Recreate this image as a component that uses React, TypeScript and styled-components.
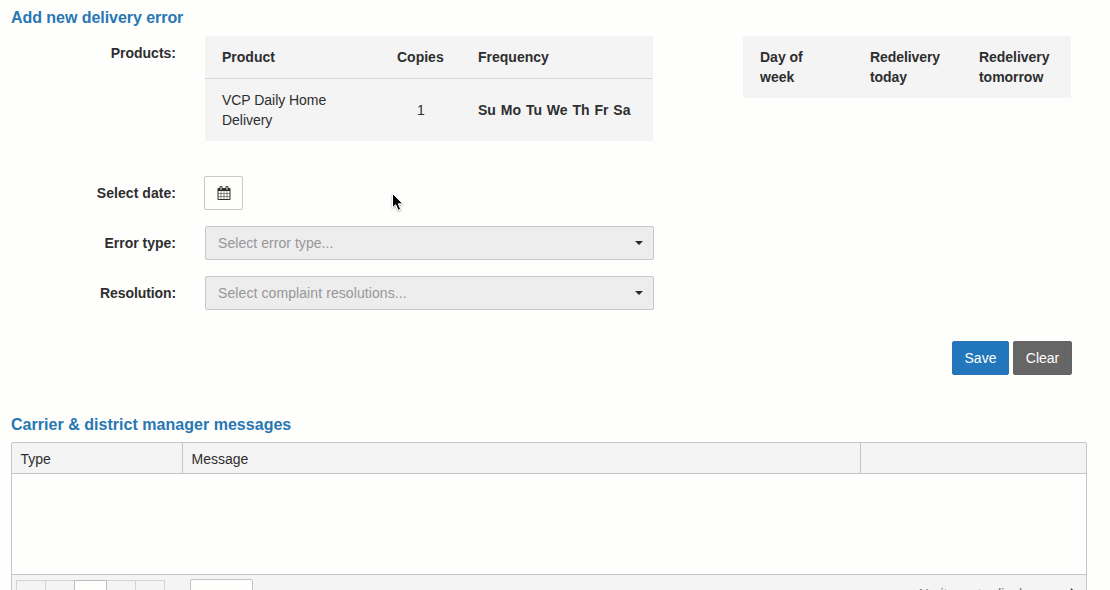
import React from "react";
import styled, { createGlobalStyle } from "styled-components";

const GlobalStyle = createGlobalStyle`
  *, *::before, *::after { box-sizing: border-box; }
  html, body { margin: 0; height: 100%; overflow: hidden; }
  body {
    background: #fefefd;
    color: #2e2e2e;
    font: 14px/20px "Liberation Sans", Arial, sans-serif;
  }
`;

const Page = styled.main`
  position: relative;
  width: 1110px;
  height: 590px;
  padding: 8px 23px 0 11px;
  overflow: hidden;
`;

const SectionTitle = styled.h2<{ $tracking?: string }>`
  margin: 0;
  font-size: 16px;
  line-height: 20px;
  font-weight: bold;
  color: #2877b3;
  letter-spacing: ${(p) => p.$tracking ?? "normal"};
`;

const ProductsRow = styled.div`
  display: flex;
  align-items: flex-start;
  margin-top: 8px;
  height: 105px;
`;

const Label = styled.label<{ $tracking?: string }>`
  flex: none;
  width: 165px;
  text-align: right;
  font-weight: bold;
  letter-spacing: ${(p) => p.$tracking ?? "normal"};
`;

const ProductsLabel = styled(Label)`
  padding-top: 7px;
`;

const Panel = styled.div<{ $left: number; $width: number }>`
  flex: none;
  width: ${(p) => p.$width}px;
  margin-left: ${(p) => p.$left}px;
  background: #f4f4f5;
`;

const PanelRow = styled.div<{ $columns: string; $divided?: boolean }>`
  display: grid;
  grid-template-columns: ${(p) => p.$columns};
  align-items: center;
  padding: 11px 0 11px 17px;
  border-bottom: ${(p) => (p.$divided ? "1px solid #d5d9de" : "0")};
`;

const Cell = styled.div<{ $bold?: boolean; $indent?: number; $max?: number; $tracking?: string }>`
  padding-left: ${(p) => p.$indent ?? 0}px;
  max-width: ${(p) => (p.$max ? `${p.$max}px` : "none")};
  font-weight: ${(p) => (p.$bold ? "bold" : "normal")};
  letter-spacing: ${(p) => p.$tracking ?? "normal"};
`;

const Weekdays = styled(Cell)`
  word-spacing: 1px;
`;

const FieldRow = styled.div<{ $gap: number }>`
  display: flex;
  align-items: center;
  height: 34px;
  margin-top: ${(p) => p.$gap}px;
`;

const DateButton = styled.button`
  display: flex;
  align-items: center;
  justify-content: center;
  width: 39px;
  height: 34px;
  margin-left: 28px;
  padding: 0;
  border: 1px solid #c9c9c9;
  border-radius: 2px;
  background: #fefefd;
  color: #2e2e2e;
`;

const Select = styled.div<{ $tracking?: string }>`
  display: flex;
  align-items: center;
  justify-content: space-between;
  width: 449px;
  height: 34px;
  margin-left: 29px;
  padding: 0 10px 0 12px;
  border: 1px solid #c8c8ca;
  border-radius: 2px;
  background: #ededee;
  color: #979797;
  letter-spacing: ${(p) => p.$tracking ?? "normal"};
`;

const Caret = styled.span`
  border: 4px solid transparent;
  border-top-color: #2b2b2b;
  border-bottom: 0;
`;

const Actions = styled.div`
  display: flex;
  justify-content: flex-end;
  gap: 4px;
  margin-top: 31px;
  padding-right: 15px;
`;

const ActionButton = styled.button<{ $color: string; $edge: string; $width: number }>`
  width: ${(p) => p.$width}px;
  height: 34px;
  padding: 0;
  border: 1px solid ${(p) => p.$edge};
  border-radius: 2px;
  background: ${(p) => p.$color};
  color: #fff;
  font: inherit;
`;

const MessagesSection = styled.section`
  margin-top: 40px;
`;

const Grid = styled.div`
  width: 1076px;
  margin-top: 7px;
  border: 1px solid #c6c6ca;
  border-radius: 2px 2px 0 0;
`;

const GridHeader = styled.div`
  display: grid;
  grid-template-columns: 170px 678px 1fr;
  height: 31px;
  background: #f4f4f5;
  border-bottom: 1px solid #c6c6ca;
`;

const GridHeaderCell = styled.div`
  padding: 6px 8px 0 8.5px;
  border-left: 1px solid #c6c6ca;
  &:first-child { border-left: 0; }
`;

const GridBody = styled.div`
  height: 100px;
`;

const Pager = styled.div`
  display: flex;
  align-items: flex-start;
  height: 44px;
  padding: 4px 8px 0 4px;
  border-top: 1px solid #c6c6ca;
  background: #f4f4f5;
`;

const PagerButtons = styled.div`
  display: flex;
  margin-top: 1px;
`;

const PagerButton = styled.span<{ $width: number; $current?: boolean }>`
  width: ${(p) => p.$width}px;
  height: 32px;
  margin-right: -1px;
  position: relative;
  z-index: ${(p) => (p.$current ? 1 : 0)};
  border: 1px solid ${(p) => (p.$current ? "#bdbdbf" : "#d3d3d6")};
  background: ${(p) => (p.$current ? "#fefefd" : "transparent")};
`;

const PageSize = styled.span`
  width: 63px;
  height: 34px;
  margin-left: 26px;
  border: 1px solid #c3c3c5;
  border-radius: 2px;
  background: #fefefd;
`;

const PagerInfo = styled.span`
  margin-left: auto;
  padding-top: 5px;
  color: #77777a;
`;

const RefreshIcon = styled.svg`
  margin: 9px 0 0 27px;
`;

const Pointer = styled.svg`
  position: absolute;
  left: 390px;
  top: 191px;
  filter: drop-shadow(0 1px 1px rgba(0, 0, 0, 0.3));
`;

const productColumns = "175px 81px 1fr";
const redeliveryColumns = "110px 109px 1fr";

export default function App() {
  return (
    <>
      <GlobalStyle />
      <Page>
        <SectionTitle $tracking="-0.05px">Add new delivery error</SectionTitle>
        <ProductsRow>
          <ProductsLabel>Products:</ProductsLabel>
          <Panel $left={29} $width={448}>
            <PanelRow $columns={productColumns} $divided>
              <Cell $bold>Product</Cell>
              <Cell $bold>Copies</Cell>
              <Cell $bold>Frequency</Cell>
            </PanelRow>
            <PanelRow $columns={productColumns}>
              <Cell $max={120} $tracking="-0.04px">VCP Daily Home Delivery</Cell>
              <Cell $indent={20}>1</Cell>
              <Weekdays $bold>Su Mo Tu We Th Fr Sa</Weekdays>
            </PanelRow>
          </Panel>
          <Panel $left={90} $width={328}>
            <PanelRow $columns={redeliveryColumns}>
              <Cell $bold $max={60}>Day of week</Cell>
              <Cell $bold $max={80} $tracking="-0.08px">Redelivery today</Cell>
              <Cell $bold $max={80} $tracking="-0.04px">Redelivery tomorrow</Cell>
            </PanelRow>
          </Panel>
        </ProductsRow>

        <FieldRow $gap={35}>
          <Label $tracking="0.05px">Select date:</Label>
          <DateButton aria-label="Select date">
            <svg width="14" height="14" viewBox="0 0 1792 1792" fill="currentColor">
              <path d="M192 1664h288v-288h-288v288zm352 0h320v-288h-320v288zm-352-352h288v-320h-288v320zm352 0h320v-320h-320v320zm-352-384h288v-288h-288v288zm736 736h320v-288h-320v288zm-384-736h320v-288h-320v288zm768 736h288v-288h-288v288zm-384-352h320v-320h-320v320zm-352-864v-288q0-13-9.5-22.5t-22.5-9.5h-64q-13 0-22.5 9.5t-9.5 22.5v288q0 13 9.5 22.5t22.5 9.5h64q13 0 22.5-9.5t9.5-22.5zm736 864h288v-320h-288v320zm-384-384h320v-288h-320v288zm384 0h288v-288h-288v288zm32-480v-288q0-13-9.5-22.5t-22.5-9.5h-64q-13 0-22.5 9.5t-9.5 22.5v288q0 13 9.5 22.5t22.5 9.5h64q13 0 22.5-9.5t9.5-22.5zm384-64v1280q0 52-38 90t-90 38h-1408q-52 0-90-38t-38-90v-1280q0-52 38-90t90-38h128v-96q0-66 47-113t113-47h64q66 0 113 47t47 113v96h384v-96q0-66 47-113t113-47h64q66 0 113 47t47 113v96h128q52 0 90 38t38 90z" />
            </svg>
          </DateButton>
        </FieldRow>
        <FieldRow $gap={16}>
          <Label>Error type:</Label>
          <Select $tracking="0.05px">Select error type...<Caret /></Select>
        </FieldRow>
        <FieldRow $gap={16}>
          <Label $tracking="-0.1px">Resolution:</Label>
          <Select $tracking="0.09px">Select complaint resolutions...<Caret /></Select>
        </FieldRow>

        <Actions>
          <ActionButton $color="#2276bb" $edge="#2a74b2" $width={57}>Save</ActionButton>
          <ActionButton $color="#666667" $edge="#636364" $width={59}>Clear</ActionButton>
        </Actions>

        <MessagesSection>
          <SectionTitle $tracking="0.03px">Carrier &amp; district manager messages</SectionTitle>
          <Grid>
            <GridHeader>
              <GridHeaderCell>Type</GridHeaderCell>
              <GridHeaderCell>Message</GridHeaderCell>
              <GridHeaderCell />
            </GridHeader>
            <GridBody />
            <Pager>
              <PagerButtons>
                <PagerButton $width={30} />
                <PagerButton $width={30} />
                <PagerButton $width={33} $current />
                <PagerButton $width={30} />
                <PagerButton $width={30} />
              </PagerButtons>
              <PageSize />
              <PagerInfo>No items to display</PagerInfo>
              <RefreshIcon width="14" height="14" viewBox="0 0 14 14" fill="none" stroke="#2e2e2e" strokeWidth="1.6">
                <path d="M7.6 3.2A4.6 4.6 0 1 0 11.6 7.8" />
                <path d="M6.8 0v6l3.6-3z" fill="#2e2e2e" stroke="none" />
              </RefreshIcon>
            </Pager>
          </Grid>
        </MessagesSection>

        <Pointer width="16" height="24" viewBox="0 0 16 24">
          <path d="M2.5 2.5v14.2l3.2-3 2.4 5.6 2.6-1.1-2.4-5.4h4.5z" fill="#050505" stroke="#fff" strokeWidth="1" />
        </Pointer>
      </Page>
    </>
  );
}
